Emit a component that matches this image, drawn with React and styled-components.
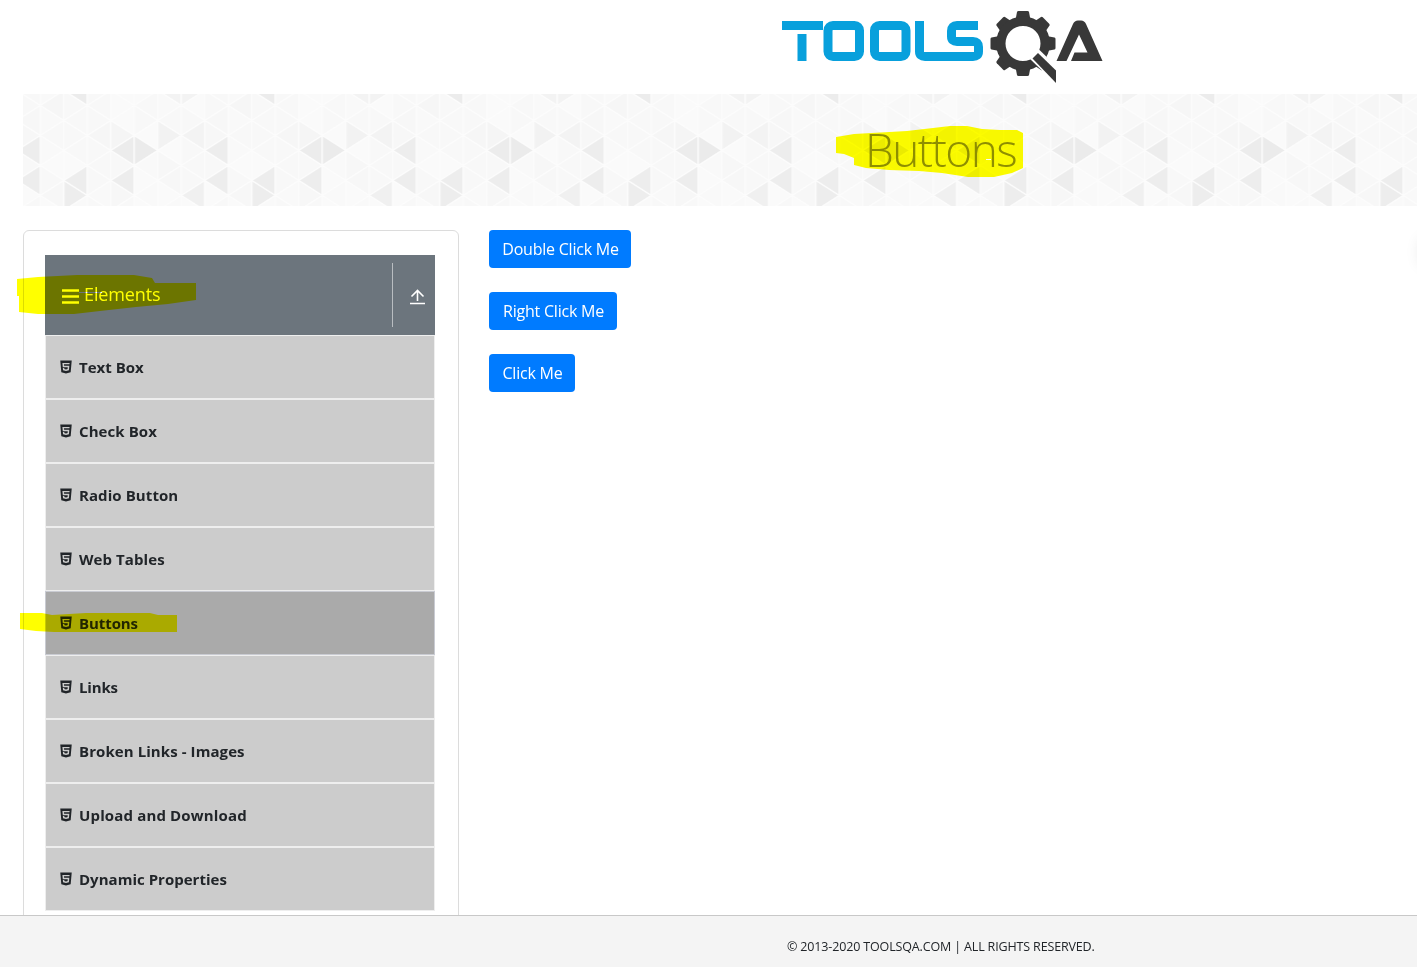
import React from 'react';
import styled, { createGlobalStyle } from 'styled-components';
import { AiFillHtml5 } from 'react-icons/ai';

const GlobalStyle = createGlobalStyle`
  *, *::before, *::after { box-sizing: border-box; }
  body {
    margin: 0;
    background: #fff;
    color: #212529;
    font: 400 16px/1.5 "Open Sans", "Noto Sans", sans-serif;
    overflow: hidden;
  }
`;

const Page = styled.div`
  position: relative;
  display: flex;
  flex-direction: column;
  width: 100%;
  height: 967px;
  overflow: hidden;
`;
const Header = styled.header`
  display: flex;
  height: 94px;
  padding: 9px 0 0 778px;
  flex: none;
`;
const Banner = styled.div`
  position: relative;
  height: 112px;
  margin-left: 23px;
  flex: none;
  display: flex;
  padding-left: 842px;
  overflow: hidden;
`;
const Pattern = styled.svg`
  position: absolute;
  inset: 0;
`;
const Title = styled.h1`
  position: relative;
  margin: 0;
  font-weight: 300;
  font-size: 46px;
  line-height: 110px;
  letter-spacing: -1.6px;
  color: #8e8e8e;
`;
const Main = styled.main`
  display: flex;
  flex: 1;
  min-height: 0;
  padding: 24px 0 0 23px;
  gap: 30px;
  overflow: hidden;
`;
const Panel = styled.aside`
  width: 436px;
  height: 720px;
  flex: none;
  border: 1px solid #dcdcdc;
  border-radius: 6px;
  padding: 24px 23px 0 21px;
`;
const GroupHeader = styled.div`
  display: flex;
  align-items: center;
  height: 80px;
  background: #6c757d;
  color: #fff;
  padding-left: 17px;
`;
const GroupTitle = styled.div`
  flex: 1;
  display: flex;
  align-items: center;
  gap: 5px;
  padding-bottom: 2px;
  font-size: 18px;
  line-height: 27px;
  letter-spacing: -0.12px;
`;
const MenuIcon = styled.svg`
  margin-top: 4px;
`;
const Toggle = styled.div`
  width: 43px;
  height: 64px;
  border-left: 1px solid #b9bdc1;
  display: flex;
  align-items: center;
  padding: 4px 0 0 17px;
`;
const Menu = styled.ul`
  list-style: none;
  margin: 0;
  padding: 0;
`;
const Item = styled.li`
  display: flex;
  align-items: center;
  gap: 5px;
  height: 64px;
  padding-left: 12px;
  border: 1px solid ${(p) => (p.$active ? '#c9cbd2' : '#eeeeee')};
  background: ${(p) => (p.$active ? '#aaaaaa' : '#cccccc')};
  font-weight: 700;
  font-size: 15px;
  letter-spacing: ${(p) => p.$spacing}px;
  svg { width: 16px; height: 16px; flex: none; }
`;
const Actions = styled.section`
  display: flex;
  flex-direction: column;
  align-items: flex-start;
  gap: 24px;
`;
const Button = styled.button`
  width: ${(p) => p.$width}px;
  height: 38px;
  border: 0;
  border-radius: 4px;
  padding: 0 0 0 1px;
  background: #007bff;
  color: #fff;
  font: 400 16px/24px "Open Sans", sans-serif;
  letter-spacing: -0.22px;
  white-space: nowrap;
`;
const Footer = styled.footer`
  height: 52px;
  flex: none;
  border-top: 1px solid #c8c8c8;
  background: #f4f4f4;
  padding: 21px 0 0 787px;
  font-size: 12.5px;
  line-height: 20px;
  letter-spacing: -0.15px;
  white-space: nowrap;
`;
const Marker = styled.svg`
  position: absolute;
  inset: 0;
  mix-blend-mode: multiply;
  pointer-events: none;
`;
const EdgeShadow = styled.div`
  position: absolute;
  left: 1421px;
  top: 240px;
  width: 20px;
  height: 24px;
  box-shadow: 0 0 16px rgba(0, 0, 0, 0.12);
`;

const items = [
  ['Text Box', 0], ['Check Box', 0.08], ['Radio Button', 0.08], ['Web Tables', 0.08],
  ['Buttons', -0.08], ['Links', -0.15], ['Broken Links - Images', 0.08],
  ['Upload and Download', 0.15], ['Dynamic Properties', 0.02],
];

const COL = 23.5;
const ROW = 15;
// One row per vertical strip; shades run from the top triangle to the bottom one.
const shades = [
  ['f9', 'f6', 'f9', 'f8', 'f9', 'fa', 'f8', 'f7', 'fa'],
  ['ec', 'f8', 'f8', 'f8', 'f8', 'fa', 'ed', 'ed', 'f9'],
  ['f8', 'f8', 'f8', 'f6', 'f8', 'f8', 'f8', 'f9', 'f8'],
  ['fa', 'fa', 'fa', 'f5', 'ec', 'f8', 'ed', 'f7', 'f8'],
  ['fa', 'f8', 'f8', 'fa', 'eb', 'f9', 'fa', 'f9', 'fa'],
  ['f3', 'f9', 'f8', 'f2', 'fa', 'f7', 'f7', 'fa', 'f9'],
  ['f3', 'fa', 'f8', 'f3', 'f8', 'f8', 'f8', 'f0', 'fa'],
  ['f8', 'f8', 'f7', 'f7', 'ed', 'f8', 'ed', 'fa', 'f8'],
];

function Triangles() {
  return shades.flatMap((column, k) =>
    column.map((s, i) => {
      const j = i - 1;
      const y = 11.5 + ROW * j;
      const pointsLeft = (k + j) % 2 === 0;
      const base = (pointsLeft ? k + 1 : k) * COL;
      const apex = (pointsLeft ? k : k + 1) * COL;
      return (
        <polygon
          key={`${k}-${i}`}
          points={`${base},${y - ROW} ${base},${y + ROW} ${apex},${y}`}
          fill={`#${s}${s}${s}`}
          stroke="#fcfcfc"
          strokeWidth="1.4"
          strokeLinejoin="round"
        />
      );
    })
  );
}

function Logo() {
  const teeth = [0, 45, 90, 135, 180, 225, 270, 315];
  return (
    <svg width="330" height="80" viewBox="778 9 330 80" role="img" aria-label="ToolsQA">
      <g fill="none" stroke="#08a0dc" strokeWidth="9">
        <path d="M782 25.5H823M802 34V61" />
        <rect x="828" y="25.5" width="31.5" height="31" rx="5" />
        <rect x="874.5" y="25.5" width="31.5" height="31" rx="5" />
        <path d="M919.5 21V51.5Q919.500 56.500 925 56.500H973Q978.500 56.500 978.500 51.500V47Q978.500 41.500 973 41.500H957Q951.500 41.500 951.500 36.500V31Q951.500 25.500 957 25.500H978" />
      </g>
      <g fill="#383838">
        {teeth.map((a) => (
          <path key={a} d="M1015.500 20L1017 12Q1017.200 11 1018.500 11H1027.500Q1028.800 11 1029 12L1030.500 20Z" transform={`rotate(${a} 1023 43.500)`} />
        ))}
        <path fillRule="evenodd" d="M1023 16.500A27 27 0 1 0 1023 70.500A27 27 0 1 0 1023 16.500ZM1023 26A17.500 17.500 0 1 1 1023 61A17.500 17.500 0 1 1 1023 26Z" />
        <path d="M1029 58L1038.500 49L1058 68V86Z" fill="#fff" />
        <path d="M1032.500 58.500L1038 53L1056 70.500V83Z" />
        <path d="M1056.500 61L1073 24Q1074.500 20.500 1078 20.500H1081Q1084.500 20.500 1086 24L1102.500 61H1071L1074.500 52.500H1087.500L1079 34.500L1066.500 61Z" />
      </g>
    </svg>
  );
}

export default function App() {
  return (
    <Page>
      <GlobalStyle />
      <Header><Logo /></Header>
      <Banner>
        <Pattern width="100%" height="112">
          <defs>
            <pattern id="triangles" x="17.3" y="0" width={COL * 8} height="150" patternUnits="userSpaceOnUse">
              <Triangles />
            </pattern>
          </defs>
          <rect width="100%" height="112" fill="url(#triangles)" />
        </Pattern>
        <Title>Buttons</Title>
      </Banner>
      <Main>
        <Panel>
          <GroupHeader>
            <GroupTitle>
              <MenuIcon width="17" height="15" viewBox="0 0 17 15">
                <path d="M0 1.500H17M0 7.500H17M0 13.500H17" stroke="#fff" strokeWidth="2.400" />
              </MenuIcon>
              Elements
            </GroupTitle>
            <Toggle>
              <svg width="15" height="16" viewBox="0 0 15 16" fill="none" stroke="#fff" strokeWidth="1.6">
                <path d="M7.500 12V1.500M1.500 7.500L7.500 1.500L13.500 7.500M0 14.500H15" />
              </svg>
            </Toggle>
          </GroupHeader>
          <Menu>
            {items.map(([label, spacing]) => (
              <Item key={label} $active={label === 'Buttons'} $spacing={spacing}>
                <AiFillHtml5 />
                {label}
              </Item>
            ))}
          </Menu>
        </Panel>
        <Actions>
          <Button $width={142}>Double Click Me</Button>
          <Button $width={128}>Right Click Me</Button>
          <Button $width={86}>Click Me</Button>
        </Actions>
      </Main>
      <Footer>© 2013-2020 TOOLSQA.COM | ALL RIGHTS RESERVED.</Footer>
      <EdgeShadow />
      <Marker width="1417" height="967" fill="#ff0" fillRule="evenodd">
        <path d="M836 137L854 134L907 131L933 128L950 126H967L982 129L1000 130H1017L1023 133V168L1012 173L994 177H968L942 173L919 171L889 170L866 168L854 165V158L844 154L836 153ZM986 159H991V160H986Z" />
        <path d="M17 279L38 277L77 275H134L152 278L155 283H196V300L168 304L136 307L100 311L74 314H38L19 312V296H17ZM79 292H102V293H79Z" />
        <path d="M20 613H42L52 615L86 613H150L158 615H177V632H54L36 631L20 629Z" />
      </Marker>
    </Page>
  );
}
